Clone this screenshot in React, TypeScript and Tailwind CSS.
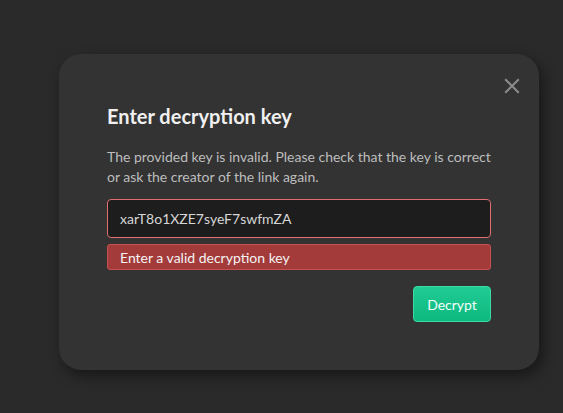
import React from 'react';

const CloseIcon: React.FC = () => (
    <svg width="16" height="16" viewBox="0 0 16 16" fill="none" stroke="currentColor" strokeWidth="2.2" strokeLinecap="square">
        <path d="M2 2 L14 14 M14 2 L2 14" />
    </svg>
);

const App: React.FC = () => {
    return (
        <div className="w-[563px] h-[413px] bg-[#2a2a2a] overflow-hidden pt-[54px] pl-[59px]" style={{ fontFamily: 'Lato, "Open Sans", sans-serif' }}>
            <div className="relative w-[480px] h-[316px] bg-[#333333] rounded-[22px] shadow-[4px_6px_14px_rgba(0,0,0,0.45)] px-12 pt-[48px]">
                <button className="absolute top-[24px] right-[19px] text-[#8a8a8a]" aria-label="Close">
                    <CloseIcon />
                </button>
                <h2 className="text-[20px] font-bold text-[#f0f0f0] leading-[28px]">Enter decryption key</h2>
                <p className="mt-[17px] text-[14px] leading-[20px] text-[#bdbdbd]">
                    The provided key is invalid. Please check that the key is correct or ask the creator of the link again.
                </p>
                <div className="mt-[12px] h-[39px] rounded-[4px] border border-[#e07070] bg-[#1d1d1d] flex items-center px-3 text-[14px] text-[#d6d6d6]">
                    xarT8o1XZE7syeF7swfmZA
                </div>
                <div className="mt-[6px] h-[26px] rounded-[3px] border border-[#c85050] bg-[#a33b3b] flex items-center px-3 text-[14px] text-[#f3f3f3]">
                    Enter a valid decryption key
                </div>
                <div className="mt-[16px] flex justify-end">
                    <button className="h-[36px] w-[78px] rounded-[4px] border border-[#3ed9a4] bg-gradient-to-b from-[#20cc95] to-[#0db97f] text-[14px] text-[#f2fffa]">
                        Decrypt
                    </button>
                </div>
            </div>
        </div>
    );
};

export default App;
